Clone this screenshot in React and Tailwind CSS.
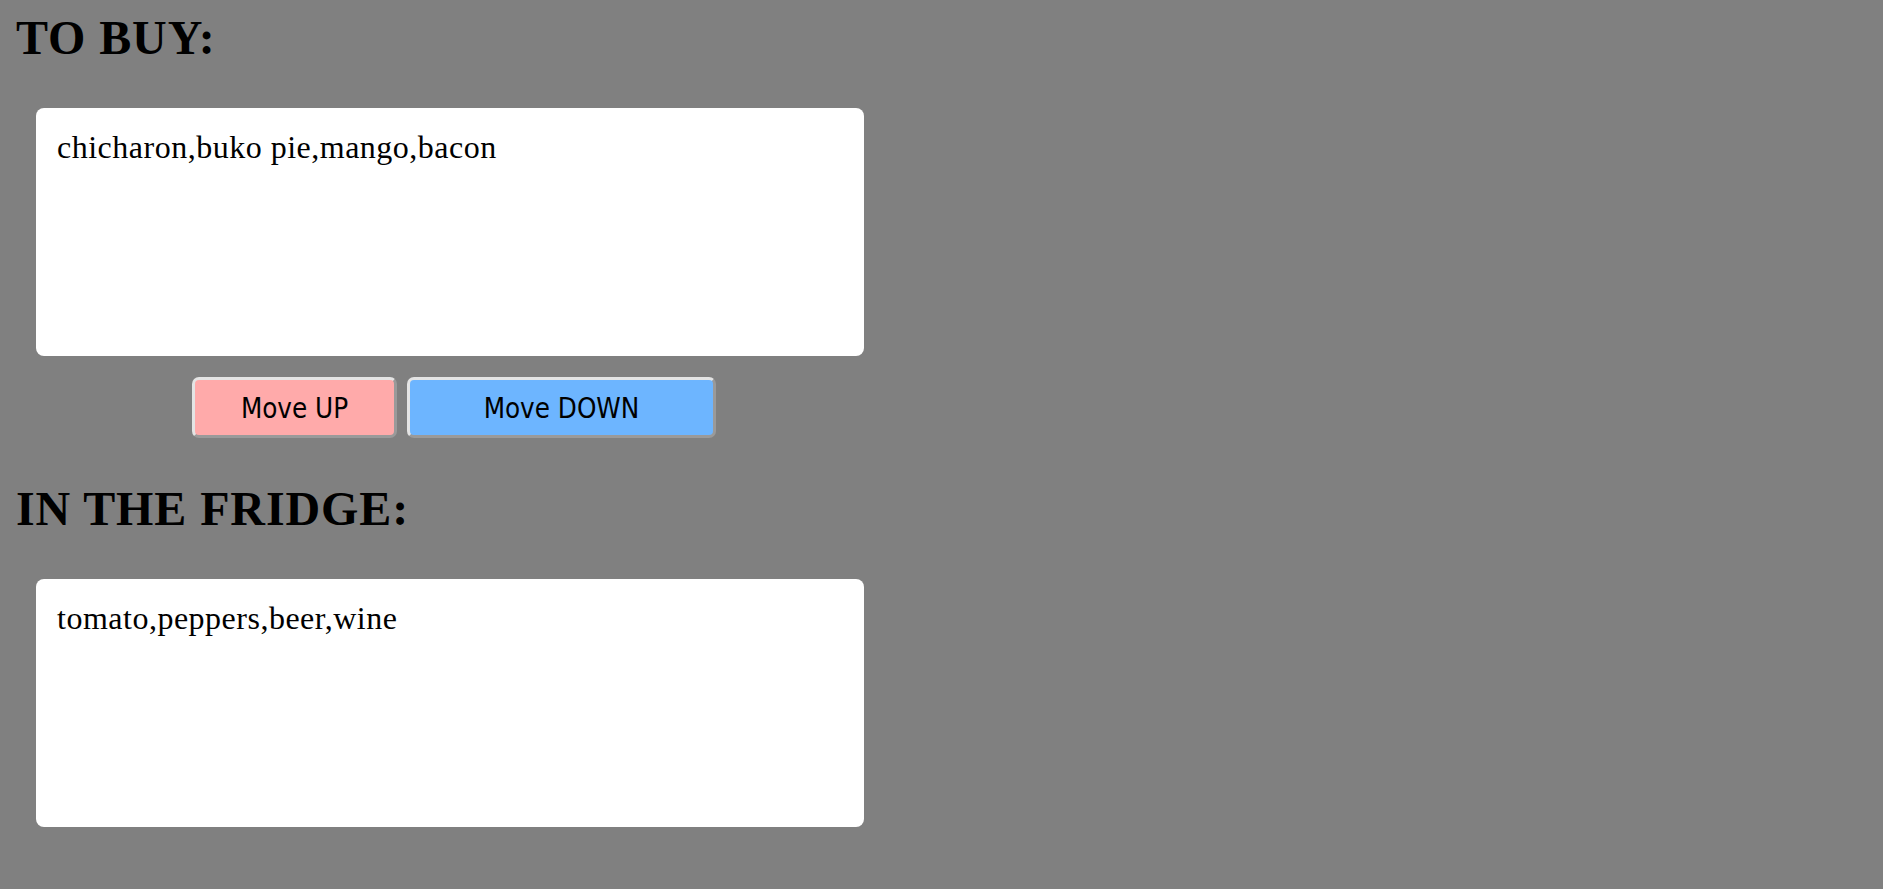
import React from "react";

function ListBox({ text }) {
  return (
    <div className="ml-[36px] w-[828px] h-[248px] bg-white rounded-[8px] p-[21px] text-[32px] leading-[36px] tracking-[0.5px] text-black" style={{ fontFamily: '"Liberation Serif", "Times New Roman", serif' }}>
      {text}
    </div>
  );
}

function Btn({ label, cls }) {
  return (
    <button
      className={`h-[61px] pt-[3px] rounded-[7px] border-[3px] border-t-[#e4e4e4] border-l-[#e4e4e4] border-b-[#9a9a9a] border-r-[#9a9a9a] text-[27.5px] text-black flex items-center justify-center ${cls}`}
      style={{ fontFamily: '"DejaVu Sans Condensed", "DejaVu Sans", sans-serif', fontStretch: "condensed" }}
    >
      {label}
    </button>
  );
}

export default function App() {
  return (
    <div className="min-h-[889px] w-full bg-[#808080] pt-[10px]">
      <h1 className="pl-[16px] text-[48px] leading-[56px] tracking-[0.9px] font-bold text-black" style={{ fontFamily: '"Liberation Serif", "Times New Roman", serif' }}>
        TO BUY:
      </h1>
      <div className="mt-[42px]">
        <ListBox text="chicharon,buko pie,mango,bacon" />
      </div>
      <div className="mt-[21px] flex gap-[10px] pl-[192px]">
        <Btn label="Move UP" cls="w-[205px] bg-[#ffaaaa]" />
        <Btn label="Move DOWN" cls="w-[309px] bg-[#6db5ff]" />
      </div>
      <h1 className="mt-[43px] pl-[16px] text-[48px] leading-[56px] tracking-[0.9px] font-bold text-black" style={{ fontFamily: '"Liberation Serif", "Times New Roman", serif' }}>
        IN THE FRIDGE:
      </h1>
      <div className="mt-[42px]">
        <ListBox text="tomato,peppers,beer,wine" />
      </div>
    </div>
  );
}
